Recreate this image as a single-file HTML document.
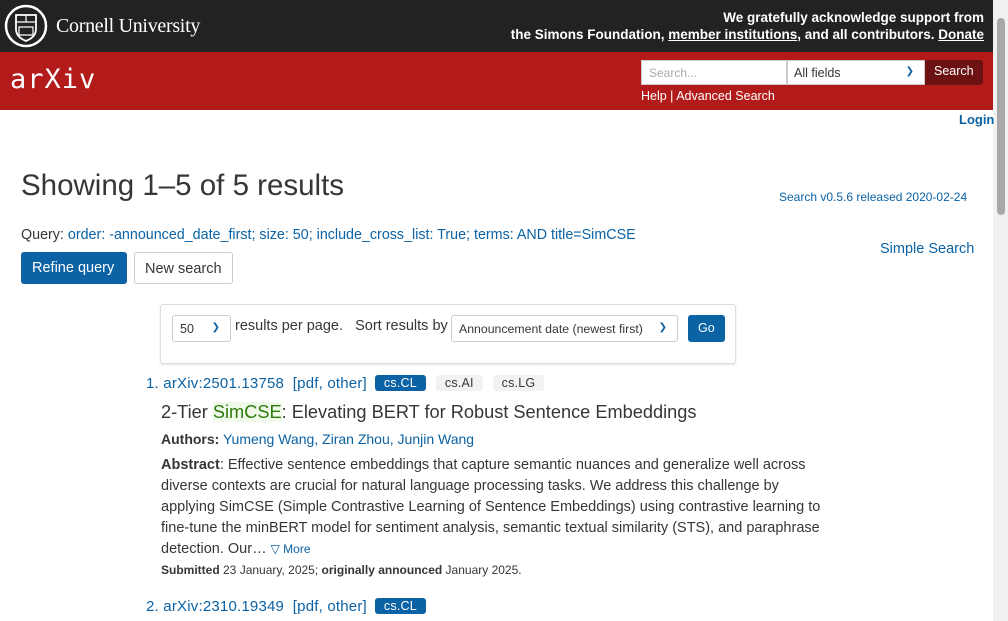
<!DOCTYPE html>
<html><head><meta charset="utf-8"><style>
*{box-sizing:border-box;margin:0;padding:0}
body{width:1008px;height:621px;overflow:hidden;font-family:"Liberation Sans",sans-serif;color:#363636;background:#fff;position:relative}
a{color:#0b62a4;text-decoration:none}
.top{position:absolute;left:0;top:0;width:993px;height:52px;background:#222}
.red{position:absolute;left:0;top:52px;width:993px;height:58px;background:#b31b1b}
.sb{position:absolute;right:0;top:0;width:15px;height:621px;background:#f1f1f1}
.sb div{position:absolute;left:4px;top:18px;width:8px;height:197px;background:#a8a8a8;border-radius:4px}
.abs{position:absolute;white-space:nowrap}
.tag{display:inline-block;padding:1px 9px;border-radius:3px;font-size:12.5px;margin-left:8px;vertical-align:1px}
</style></head><body>
<div class="top">
 <svg class="abs" style="left:4px;top:4px" width="44" height="44" viewBox="0 0 44 44"><circle cx="22" cy="22" r="20" fill="none" stroke="#fff" stroke-width="2.5"/><path d="M12 11h20v14q0 8-10 12q-10-4-10-12z" fill="none" stroke="#fff" stroke-width="1.8"/><path d="M12 18h20M22 11v7M15 23h14v8h-14z" stroke="#fff" stroke-width="1.2" fill="none"/></svg>
 <div class="abs" style="left:56px;top:15px;color:#fff;font-family:'Liberation Serif',serif;font-size:20px;letter-spacing:-0.3px">Cornell University</div>
 <div class="abs" style="right:9px;top:9px;color:#fff;font-size:13.5px;font-weight:bold;text-align:right;line-height:17px">We gratefully acknowledge support from<br>the Simons Foundation, <u>member institutions</u>, and all contributors. <u>Donate</u></div>
</div>
<div class="red">
 <div class="abs" style="left:10px;top:12px;color:#fff;font-family:'DejaVu Sans Mono',monospace;font-size:27px;letter-spacing:1px">ar<span>X</span>iv</div>
 <div class="abs" style="left:641px;top:8px;width:146px;height:25px;background:#fff;border:1px solid #ccc;font-size:12px;color:#aaa;padding:5px 7px">Search...</div>
 <div class="abs" style="left:787px;top:8px;width:138px;height:25px;background:#fff;border:1px solid #ccc;font-size:12.5px;color:#363636;padding:5px 6px">All fields<span style="position:absolute;right:10px;color:#0b62a4;font-size:10px">&#10095;</span></div>
 <div class="abs" style="left:925px;top:8px;width:58px;height:25px;background:#6d1212;color:#fff;font-size:12.5px;padding:4px 9px;border-radius:0 3px 3px 0">Search</div>
 <div class="abs" style="left:641px;top:37px;color:#fff;font-size:12.5px">Help | Advanced Search</div>
</div>
<div class="sb"><div></div></div>
<div class="abs" style="left:959px;top:112px;font-size:13px;font-weight:bold;color:#0b62a4">Login</div>
<div class="abs" style="left:21px;top:169px;font-size:29.5px;color:#363636">Showing 1–5 of 5 results</div>
<div class="abs" style="left:779px;top:190px;font-size:12px;color:#0b62a4">Search v0.5.6 released 2020-02-24</div>
<div class="abs" style="left:21px;top:227px;font-size:14.3px">Query: <a>order: -announced_date_first; size: 50; include_cross_list: True; terms: AND title=SimCSE</a></div>
<div class="abs" style="left:880px;top:241px;font-size:14.5px;color:#0b62a4">Simple Search</div>
<div class="abs" style="left:21px;top:252px;width:106px;height:32px;background:#0b62a4;color:#fff;border-radius:3px;font-size:14.5px;padding:8px 11px">Refine query</div>
<div class="abs" style="left:134px;top:252px;width:99px;height:32px;border:1px solid #ccc;border-radius:3px;font-size:14.5px;padding:8px 10px">New search</div>
<div class="abs" style="left:160px;top:304px;width:576px;height:60px;border:1px solid #ddd;border-radius:3px;box-shadow:0 1px 2px rgba(0,0,0,.1)"></div>
<div class="abs" style="left:172px;top:315px;width:59px;height:27px;border:1px solid #ccc;border-radius:3px;font-size:12.5px;padding:6px 7px">50<span style="position:absolute;right:10px;color:#0b62a4;font-size:10px">&#10095;</span></div>
<div class="abs" style="left:235px;top:318px;font-size:14.5px">results per page.&nbsp;&nbsp; Sort results by</div>
<div class="abs" style="left:451px;top:315px;width:227px;height:27px;border:1px solid #ccc;border-radius:3px;font-size:12.3px;padding:6px 7px">Announcement date (newest first)<span style="position:absolute;right:10px;color:#0b62a4;font-size:10px">&#10095;</span></div>
<div class="abs" style="left:688px;top:315px;width:37px;height:27px;background:#0b62a4;color:#fff;border-radius:3px;font-size:12.5px;padding:6px 10px">Go</div>
<div class="abs" style="left:146px;top:375px;font-size:15px;color:#0b62a4;letter-spacing:0.2px">1. arXiv:2501.13758&nbsp; [pdf, other]<span class="tag" style="background:#0b62a4;color:#fff">cs.CL</span><span class="tag" style="background:#f2f2f2;color:#363636;margin-left:10px">cs.AI</span><span class="tag" style="background:#f2f2f2;color:#363636;margin-left:10px">cs.LG</span></div>
<div class="abs" style="left:161px;top:402px;font-size:18.2px">2-Tier <span style="background:#effaeb;color:#2d7a0d">SimCSE</span>: Elevating BERT for Robust Sentence Embeddings</div>
<div class="abs" style="left:161px;top:431px;font-size:14px"><b>Authors:</b> <a>Yumeng Wang, Ziran Zhou, Junjin Wang</a></div>
<div class="abs" style="left:161px;top:455px;font-size:14.5px;line-height:21px;white-space:normal;width:670px"><b>Abstract</b>: Effective sentence embeddings that capture semantic nuances and generalize well across diverse contexts are crucial for natural language processing tasks. We address this challenge by applying SimCSE (Simple Contrastive Learning of Sentence Embeddings) using contrastive learning to fine-tune the minBERT model for sentiment analysis, semantic textual similarity (STS), and paraphrase detection. Our… <a style="font-size:12px">▽ More</a></div>
<div class="abs" style="left:161px;top:563px;font-size:12px"><b>Submitted</b> 23 January, 2025; <b>originally announced</b> January 2025.</div>
<div class="abs" style="left:146px;top:598px;font-size:15px;color:#0b62a4;letter-spacing:0.2px">2. arXiv:2310.19349&nbsp; [pdf, other]<span class="tag" style="background:#0b62a4;color:#fff">cs.CL</span></div>
</body></html>
